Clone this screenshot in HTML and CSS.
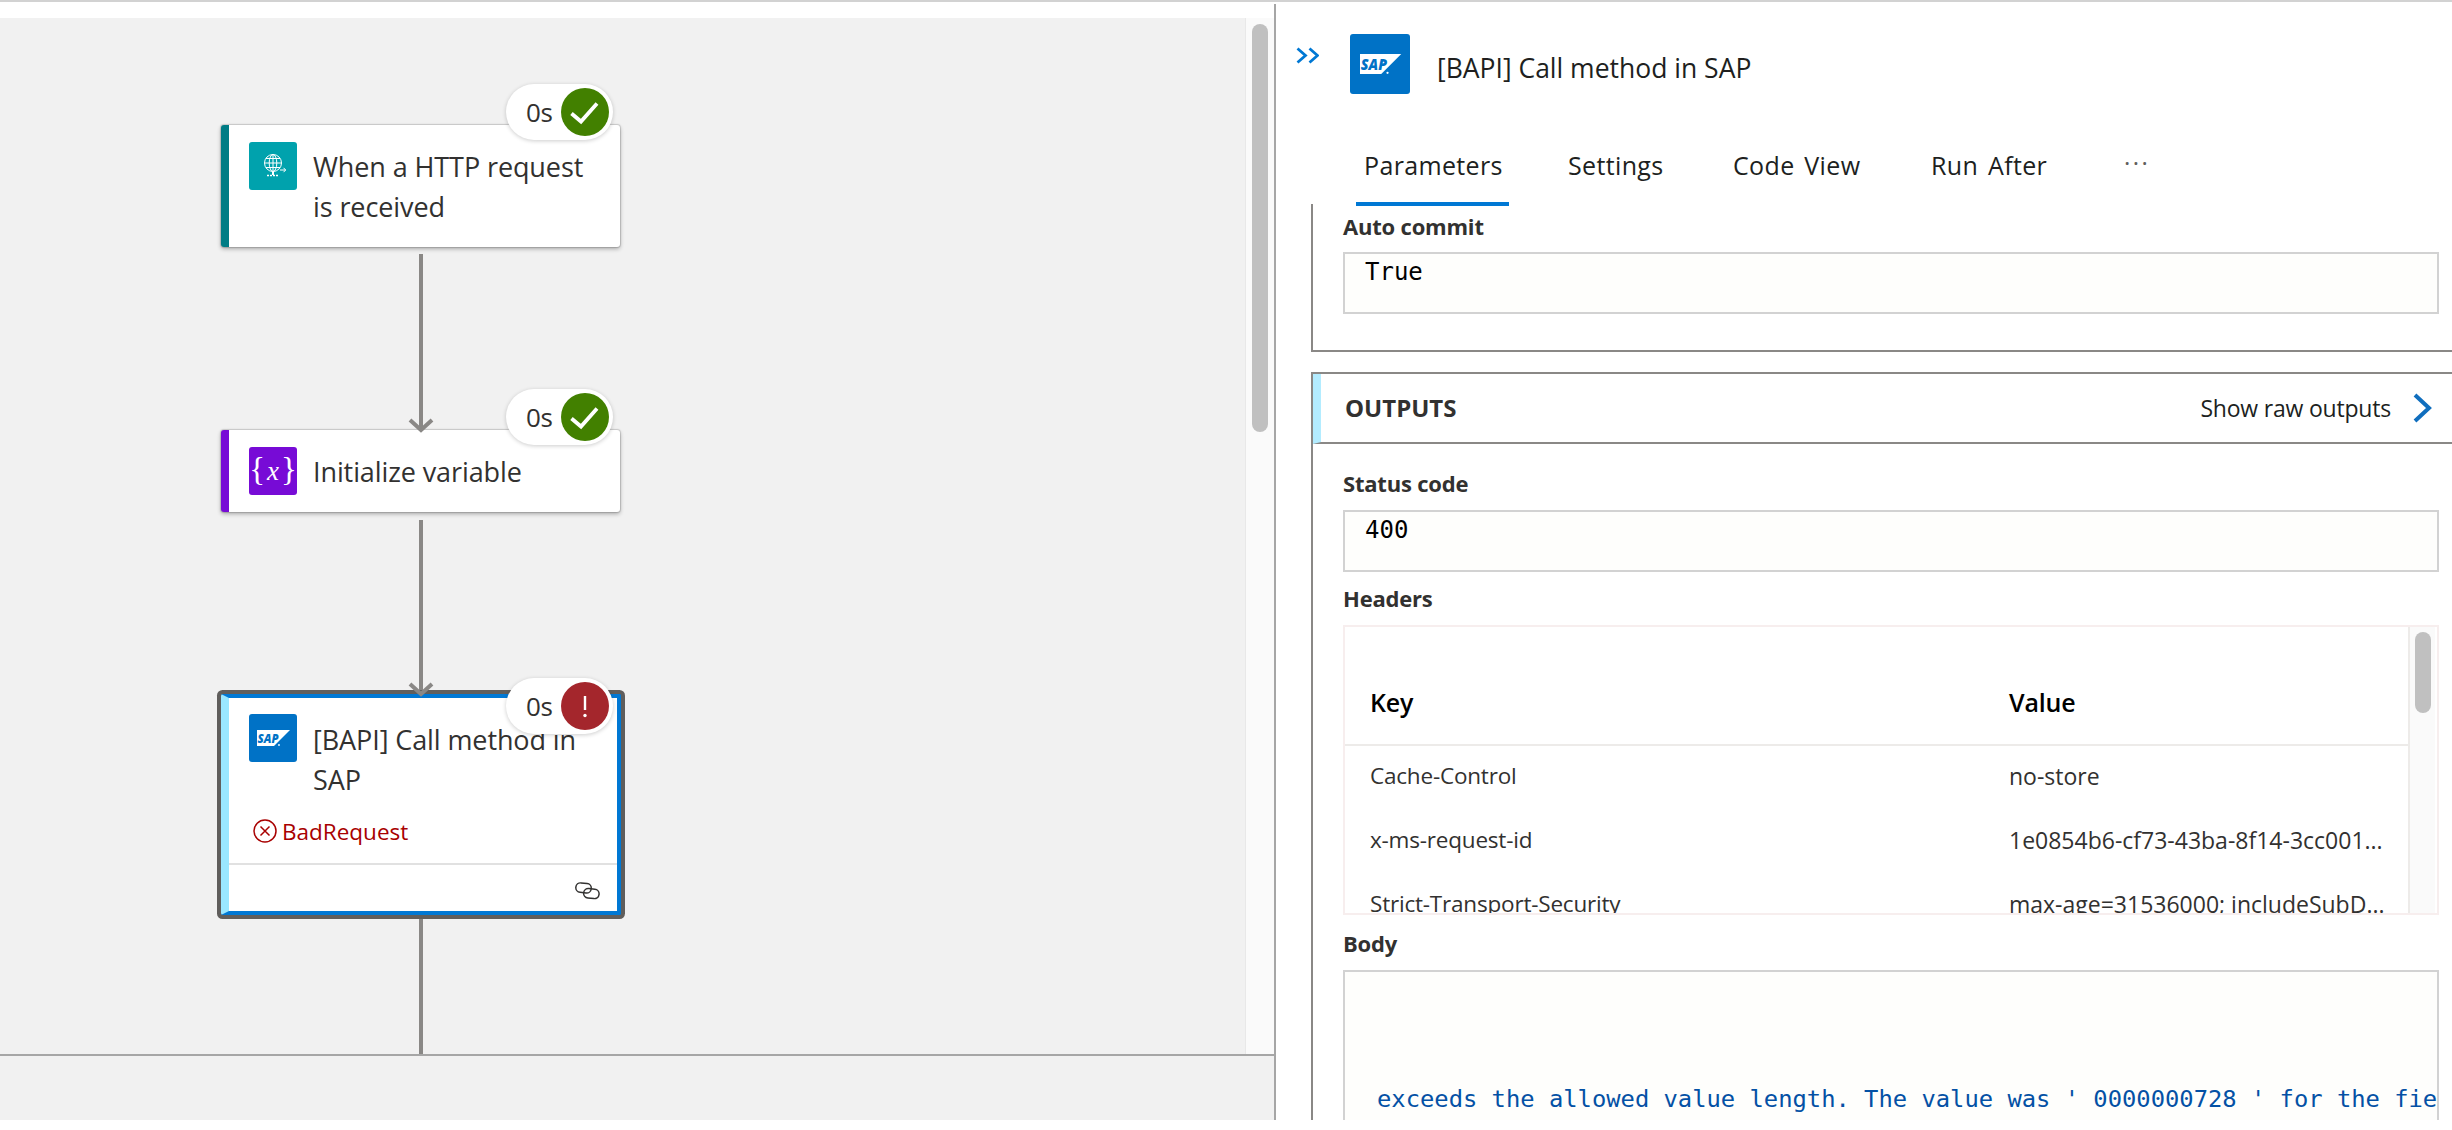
FILE: index.html
```html
<!DOCTYPE html>
<html>
<head>
  <meta charset="UTF-8">
  <title>[BAPI] Call method in SAP</title>
  <link rel="stylesheet" href="styles.css">
</head>
<body>
  <div class="app">
    <div class="designer">
      <div class="designer-top"></div>
      <div class="designer-main">
        <div class="canvas">
          <!-- connectors -->
          <div class="wire wire-1"></div>
          <div class="wire wire-2"></div>
          <div class="wire wire-3"></div>

          <div class="node node-http">
            <div class="node-row">
              <div class="tile tile-http">
                <svg width="48" height="48" viewBox="0 0 48 48" fill="none" stroke="#fff" stroke-width="1">
                  <circle cx="24" cy="21" r="8.5"/>
                  <ellipse cx="24" cy="21" rx="3.8" ry="8.5"/>
                  <path d="M15.5 21h17M16.8 16.5h14.4M16.8 25.5h14.4M24 12.5v17"/>
                  <path d="M24 30v3" stroke-width="2"/>
                  <path d="M18 33.5h12" stroke-width="1.6" stroke-dasharray="2 1"/>
                  <path d="M31 28h5.5M34.5 25.8l2.2 2.2-2.2 2.2"/>
                </svg>
              </div>
              <div class="node-title">When a HTTP request is received</div>
            </div>
            <div class="badge">
              <span>0s</span>
              <svg class="status" width="48" height="48" viewBox="0 0 48 48">
                <circle cx="24" cy="24" r="24" fill="#428000"/>
                <path d="M10.5 25.5l9.5 8L36 15.5" fill="none" stroke="#fff" stroke-width="3.8"/>
              </svg>
            </div>
          </div>

          <svg class="arrow arrow-1" width="26" height="15" viewBox="0 0 26 15"><path d="M2 2l11 10L24 2" fill="none" stroke="#8a8886" stroke-width="4"/></svg>

          <div class="node node-var">
            <div class="node-row">
              <div class="tile tile-var"><span class="brace">{</span><i>x</i><span class="brace">}</span></div>
              <div class="node-title">Initialize variable</div>
            </div>
            <div class="badge">
              <span>0s</span>
              <svg class="status" width="48" height="48" viewBox="0 0 48 48">
                <circle cx="24" cy="24" r="24" fill="#428000"/>
                <path d="M10.5 25.5l9.5 8L36 15.5" fill="none" stroke="#fff" stroke-width="3.8"/>
              </svg>
            </div>
          </div>

          <div class="node node-sap">
            <div class="node-row">
              <div class="tile tile-sap">
                <svg width="48" height="48" viewBox="0 0 48 48">
                  <path d="M8 16h33L25 32H8z" fill="#fff"/>
                  <text x="8.6" y="28.6" class="sap-mark" font-size="12.5" textLength="21" lengthAdjust="spacingAndGlyphs">SAP</text>
                  <circle cx="30" cy="31" r="0.9" fill="#fff"/>
                </svg>
              </div>
              <div class="node-title">[BAPI] Call method in SAP</div>
            </div>
            <div class="node-error">
              <svg width="24" height="24" viewBox="0 0 24 24" fill="none" stroke="#a80000" stroke-width="1.5">
                <circle cx="12" cy="12" r="11"/>
                <path d="M7.5 7.5l9 9M16.5 7.5l-9 9"/>
              </svg>
              <span>BadRequest</span>
            </div>
            <div class="node-foot">
              <svg width="25" height="18" viewBox="0 0 25 18" fill="none" stroke="#323130" stroke-width="1.5">
                <rect x="0.8" y="1.2" width="15.5" height="9.5" rx="4.75" transform="rotate(6 8.5 6)"/>
                <rect x="8.6" y="6.8" width="15.5" height="9.5" rx="4.75" transform="rotate(6 16.3 11.5)"/>
              </svg>
            </div>
            <div class="badge">
              <span>0s</span>
              <svg class="status" width="48" height="48" viewBox="0 0 48 48">
                <circle cx="24" cy="24" r="24" fill="#a4262c"/>
                <rect x="22.8" y="14" width="2.4" height="14" fill="#fff"/>
                <circle cx="24" cy="33.5" r="1.7" fill="#fff"/>
              </svg>
            </div>
          </div>

          <svg class="arrow arrow-2" width="26" height="15" viewBox="0 0 26 15"><path d="M2 2l11 10L24 2" fill="none" stroke="#8a8886" stroke-width="4"/></svg>
        </div>
        <div class="vbar"><div class="vthumb"></div></div>
      </div>
      <div class="designer-foot"></div>
    </div>

    <div class="panel">
      <div class="panel-head">
        <svg class="collapse" width="23" height="17" viewBox="0 0 23 17" fill="none" stroke="#0078d4" stroke-width="2.8">
          <path d="M1.5 1.5l8 7-8 7M13.5 1.5l8 7-8 7"/>
        </svg>
        <div class="tile tile-head">
          <svg width="60" height="60" viewBox="0 0 48 48">
            <path d="M8 16h33L25 32H8z" fill="#fff"/>
            <text x="8.6" y="28.6" class="sap-mark" font-size="12.5" textLength="21" lengthAdjust="spacingAndGlyphs">SAP</text>
            <circle cx="30" cy="31" r="0.9" fill="#fff"/>
          </svg>
        </div>
        <div class="panel-title">[BAPI] Call method in SAP</div>
      </div>

      <div class="tabs">
        <div class="tab tab-active">Parameters</div>
        <div class="tab">Settings</div>
        <div class="tab">Code View</div>
        <div class="tab">Run After</div>
        <div class="tab tab-more">···</div>
      </div>

      <div class="panel-body">
        <div class="inputs">
          <div class="label">Auto commit</div>
          <div class="field">True</div>
        </div>

        <div class="outputs">
          <div class="outputs-head">
            <div class="outputs-name">OUTPUTS</div>
            <div class="raw-link">
              <span>Show raw outputs</span>
              <svg width="19" height="30" viewBox="0 0 19 30" fill="none" stroke="#106ebe" stroke-width="4">
                <path d="M2 2l14 13L2 28"/>
              </svg>
            </div>
          </div>

          <div class="outputs-body">
            <div class="label">Status code</div>
            <div class="field field-status">400</div>

            <div class="label label-next">Headers</div>
            <div class="table-box">
              <div class="table-scroll">
                <div class="table-row table-headrow">
                  <div>Key</div>
                  <div>Value</div>
                </div>
                <div class="table-row">
                  <div>Cache-Control</div>
                  <div class="table-value">no-store</div>
                </div>
                <div class="table-row">
                  <div>x-ms-request-id</div>
                  <div class="table-value">1e0854b6-cf73-43ba-8f14-3cc001...</div>
                </div>
                <div class="table-row">
                  <div>Strict-Transport-Security</div>
                  <div class="table-value">max-age=31536000; includeSubD...</div>
                </div>
              </div>
              <div class="table-bar"><div class="table-thumb"></div></div>
            </div>

            <div class="label label-body">Body</div>
            <div class="body-box">
              <div class="body-text">exceeds the allowed value length. The value was ' 0000000728 ' for the field</div>
            </div>
          </div>
        </div>
      </div>
    </div>
  </div>
</body>
</html>
```

FILE: styles.css
```css
html, body {
  margin: 0;
  padding: 0;
  background: #fff;
}

body {
  width: 2452px;
  height: 1130px;
  overflow: hidden;
  font-family: "Open Sans", "Noto Sans", sans-serif;
  color: #323130;
}

.app {
  display: flex;
  height: 1120px;
  border-top: 2px solid #d2d2d2;
  box-sizing: border-box;
}

/* left side */
.designer {
  width: 1276px;
  margin-top: 2px;
  border-right: 2px solid #a6a6a6;
  box-sizing: border-box;
  display: flex;
  flex-direction: column;
}

.designer-top {
  height: 14px;
}

.designer-main {
  display: flex;
  height: 1036px;
}

.designer-foot {
  flex: 1;
  background: #f1f1f1;
  border-top: 2px solid #a6a6a6;
}

.canvas {
  position: relative;
  flex: 1;
  background: #f1f1f1;
  overflow: hidden;
}

.vbar {
  width: 29px;
  box-sizing: border-box;
  background: #fafafa;
  border-left: 1px solid #e8e8e8;
  padding: 6px 0 0 6px;
}

.vthumb {
  width: 16px;
  height: 408px;
  background: #c0c0c0;
  border-radius: 8px;
}

.wire {
  position: absolute;
  left: 419px;
  width: 4px;
  background: #8a8886;
}

.wire-1 { top: 236px; height: 174px; }
.wire-2 { top: 502px; height: 172px; }
.wire-3 { top: 901px; height: 135px; }

.arrow {
  position: absolute;
  left: 408px;
  z-index: 2;
}

.arrow-1 { top: 400px; }
.arrow-2 { top: 664px; }

.node {
  position: absolute;
  left: 221px;
  width: 399px;
  background: #fff;
  box-sizing: border-box;
  border-left: 8px solid;
  border-radius: 3px;
  box-shadow: 0 2px 4px rgba(0, 0, 0, 0.3), 0 0 1px 1px rgba(0, 0, 0, 0.14);
}

.node-http {
  top: 107px;
  border-left-color: #007c85;
}

.node-var {
  top: 412px;
  border-left-color: #770bd6;
}

.node-sap {
  top: 676px;
  width: 400px;
  height: 221px;
  border: 4px solid #0078d4;
  border-left: 8px solid #9ae7ff;
  border-radius: 2px;
  box-shadow: 0 0 0 4px #605e5c;
}

.node-row {
  display: flex;
  padding: 17px 20px 17px 20px;
}

.node-sap .node-row {
  padding: 16px 20px 0 20px;
}

.tile {
  flex: none;
  width: 48px;
  height: 48px;
  border-radius: 3px;
  display: flex;
  align-items: center;
  justify-content: center;
}

.tile-http { background: #00a2ad; }
.tile-sap, .tile-head { background: #0072c6; }

.tile-var {
  background: #770bd6;
  color: #fff;
  font-family: "Liberation Serif", serif;
  font-size: 27px;
  line-height: 48px;
}

.tile-var .brace {
  font-size: 33px;
  font-weight: normal;
  margin-top: -4px;
}

.tile-var i {
  margin: 0 2px;
}

.sap-mark {
  font-family: "Open Sans", sans-serif;
  font-weight: 800;
  font-style: italic;
  fill: #0072c6;
}

.node-title {
  margin: 5px 0 3px 16px;
  font-size: 27px;
  line-height: 40px;
  letter-spacing: -0.1px;
}

.node-sap .node-title {
  margin-top: 6px;
  margin-bottom: 0;
}

.badge {
  position: absolute;
  top: -41px;
  right: 7px;
  z-index: 3;
  display: flex;
  align-items: center;
  width: 107px;
  height: 56px;
  box-sizing: border-box;
  padding-left: 20px;
  background: #fff;
  border-radius: 28px;
  box-shadow: 0 1px 4px rgba(0, 0, 0, 0.2);
  font-size: 26px;
}

.badge span {
  width: 35px;
  letter-spacing: -0.4px;
}

.node-sap .badge {
  top: -20px;
  right: 4px;
}

.node-error {
  display: flex;
  align-items: center;
  gap: 5px;
  margin: 19px 0 0 24px;
  height: 24px;
  color: #a80000;
  font-size: 22.5px;
}

.node-foot {
  display: flex;
  justify-content: flex-end;
  margin-top: 20px;
  padding: 17px 17px 0 0;
  border-top: 2px solid #e1e1e1;
}

/* right side */
.panel {
  flex: 1;
  min-width: 0;
  margin-left: 0;
  display: flex;
  flex-direction: column;
  overflow: hidden;
  color: #201f1e;
}

.panel-head {
  display: flex;
  align-items: flex-start;
  padding: 32px 0 0 20px;
}

.collapse {
  margin-top: 13px;
}

.tile-head {
  width: 60px;
  height: 60px;
  margin-left: 31px;
}

.panel-title {
  margin-left: 27px;
  font-size: 26.5px;
  line-height: 32px;
  padding-top: 18px;
}

.tabs {
  display: grid;
  grid-template-columns: 153px 114px 147px 134px auto;
  gap: 51px;
  justify-content: start;
  padding: 55px 0 0 80px;
}

.tab {
  padding: 0 8px 21px;
  border-bottom: 4px solid transparent;
  font-size: 25px;
  line-height: 32px;
  letter-spacing: 0.35px;
  word-spacing: 3px;
}

.tab-active {
  border-bottom-color: #0078d4;
}

.tab-more {
  margin-left: 8px;
  color: #605e5c;
  font-size: 24px;
  letter-spacing: 2.5px;
  line-height: 28px;
}

.panel-body {
  flex: 1;
  margin: -2px 0 0 35px;
  overflow: hidden;
}

.inputs {
  padding: 8px 13px 36px 30px;
  border-left: 2px solid #8a8886;
  border-bottom: 2px solid #8a8886;
}

.label {
  font-size: 22px;
  line-height: 28px;
  font-weight: 700;
  color: #323130;
  letter-spacing: -0.2px;
}

.field {
  margin-top: 12px;
  height: 62px;
  box-sizing: border-box;
  padding: 2px 0 0 20px;
  border: 2px solid #d2d2d2;
  background: #fefefc;
  font-family: "DejaVu Sans Mono", monospace;
  font-size: 24px;
  line-height: 32px;
  color: #000;
}

.field-status {
  margin-top: 13px;
}

.outputs {
  margin-top: 20px;
  border-top: 2px solid #8a8886;
  border-left: 2px solid #8a8886;
}

.outputs-head {
  display: flex;
  align-items: center;
  justify-content: space-between;
  height: 68px;
  padding: 0 20px 0 24px;
  border-left: 8px solid #b3ecff;
  border-bottom: 2px solid #8a8886;
  box-sizing: content-box;
}

.outputs-name {
  margin-top: -2px;
  font-size: 24px;
  font-weight: 700;
  color: #323130;
}

.raw-link {
  display: flex;
  align-items: center;
  gap: 22px;
  font-size: 23px;
  letter-spacing: -0.2px;
  color: #201f1e;
}

.outputs-body {
  padding: 25px 13px 0 30px;
}

.label-next {
  margin-top: 12px;
}

.table-box {
  display: flex;
  margin-top: 13px;
  height: 290px;
  box-sizing: border-box;
  border: 2px solid #f7eeee;
  overflow: hidden;
}

.table-scroll {
  flex: 1;
  min-width: 0;
}

.table-row {
  display: grid;
  grid-template-columns: 639px 1fr;
  height: 64px;
  padding-left: 25px;
  font-size: 22.5px;
  line-height: 60px;
  letter-spacing: -0.2px;
  color: #323130;
}

.table-value {
  font-size: 23px;
  letter-spacing: 0;
}

.table-headrow {
  height: 119px;
  box-sizing: border-box;
  padding-top: 48px;
  border-bottom: 2px solid #edebe9;
  font-size: 25px;
  line-height: 54px;
  font-weight: 600;
  color: #000;
}

.table-bar {
  flex: none;
  width: 27px;
  margin-right: 2px;
  box-sizing: border-box;
  background: #fafafa;
  border-left: 2px solid #edebe9;
  padding: 5px 0 0 5px;
}

.table-thumb {
  width: 16px;
  height: 81px;
  border-radius: 8px;
  background: #c0c0c0;
}

.label-body {
  margin-top: 14px;
}

.body-box {
  margin-top: 13px;
  height: 300px;
  box-sizing: border-box;
  padding: 111px 0 0 32px;
  border: 2px solid #d2d2d2;
  background: #fefefc;
  overflow: hidden;
}

.body-text {
  font-family: "DejaVu Sans Mono", monospace;
  font-size: 23.8px;
  line-height: 32px;
  color: #0451a5;
  white-space: nowrap;
}
```
